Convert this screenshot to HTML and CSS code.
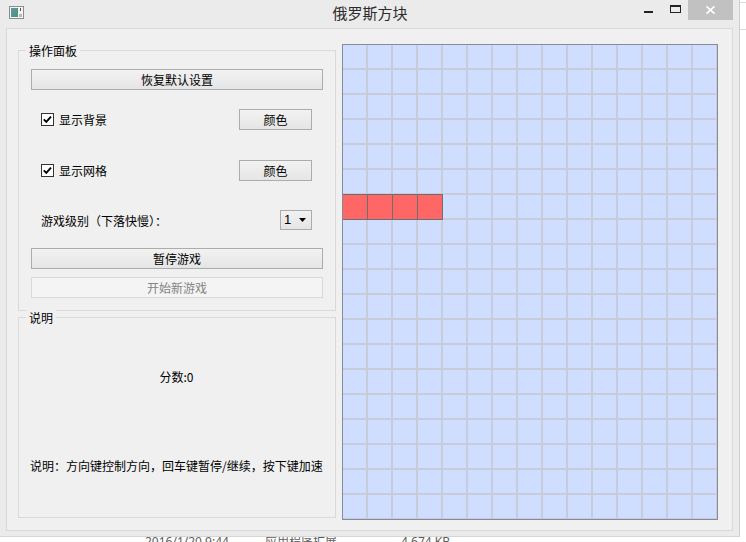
FILE: index.html
```html
<!DOCTYPE html>
<html lang="zh-CN">
<head>
<meta charset="utf-8">
<title>俄罗斯方块</title>
<link rel="stylesheet" href="styles.css">
</head>
<body>
<div class="screen">
  <div class="top">
    <div class="window">
      <div class="titlebar">
        <div class="tb-left">
          <svg class="app-icon" width="15" height="13" viewBox="0 0 15 13">
            <defs>
              <linearGradient id="ig" x1="0" y1="0" x2="1" y2="1">
                <stop offset="0" stop-color="#6b8fb0"/>
                <stop offset="1" stop-color="#3f9c70"/>
              </linearGradient>
            </defs>
            <rect x="0.5" y="0.5" width="14" height="12" fill="#f4f4f4" stroke="#8c8c8c"/>
            <rect x="2" y="2" width="7" height="9" fill="url(#ig)"/>
            <rect x="11" y="2" width="1" height="3" fill="#2f5f5f"/>
            <rect x="10" y="8" width="3" height="3" fill="#b8b8b8"/>
          </svg>
        </div>
        <div class="tb-title">俄罗斯方块</div>
        <div class="tb-controls">
          <div class="ctl ctl-min"><span class="min-glyph"></span></div>
          <div class="ctl ctl-max"><span class="max-glyph"></span></div>
          <div class="ctl ctl-close">
            <svg width="9" height="8" viewBox="0 0 9 8"><path d="M0.5 0.3 L8.5 7.7 M8.5 0.3 L0.5 7.7" stroke="#fff" stroke-width="1.6" fill="none"/></svg>
          </div>
        </div>
      </div>
      <div class="client">
        <div class="side">
          <div class="group group-ops">
            <span class="group-title">操作面板</span>
            <button class="btn btn-wide btn-reset">恢复默认设置</button>
            <div class="row row-first">
              <label class="check">
                <svg class="cb" width="13" height="13" viewBox="0 0 13 13"><rect x="0.5" y="0.5" width="12" height="12" fill="#fff" stroke="#333"/><path d="M2.8 6.3 L5.3 8.8 L10 3.6" fill="none" stroke="#000" stroke-width="1.9"/></svg>
                <span>显示背景</span>
              </label>
              <button class="btn btn-color">颜色</button>
            </div>
            <div class="row row-second">
              <label class="check">
                <svg class="cb" width="13" height="13" viewBox="0 0 13 13"><rect x="0.5" y="0.5" width="12" height="12" fill="#fff" stroke="#333"/><path d="M2.8 6.3 L5.3 8.8 L10 3.6" fill="none" stroke="#000" stroke-width="1.9"/></svg>
                <span>显示网格</span>
              </label>
              <button class="btn btn-color">颜色</button>
            </div>
            <div class="row row-level">
              <span>游戏级别（下落快慢）：</span>
              <div class="combo">
                <span class="combo-val">1</span>
                <svg class="combo-arrow" width="7" height="4" viewBox="0 0 7 4"><path d="M0 0 H7 L3.5 4 Z" fill="#000"/></svg>
              </div>
            </div>
            <button class="btn btn-wide btn-pause">暂停游戏</button>
            <button class="btn btn-wide btn-new" disabled>开始新游戏</button>
          </div>
          <div class="group group-info">
            <span class="group-title">说明</span>
            <div class="score">分数:0</div>
            <div class="help">说明：方向键控制方向，回车键暂停/继续，按下键加速</div>
          </div>
        </div>
        <svg class="board" width="376" height="476" viewBox="0 0 376 476">
          <defs>
            <pattern id="cell" width="25" height="25" patternUnits="userSpaceOnUse">
              <rect width="25" height="25" fill="#cfddff"/>
              <path d="M0 0 V25 M25 0 V25 M0 0 H25 M0 25 H25" stroke="#c8cbd9" stroke-width="2" fill="none"/>
            </pattern>
          </defs>
          <rect width="376" height="476" fill="url(#cell)"/>
          <g fill="#ff6666" stroke="#6e6e6e">
            <rect x="0.5" y="150.5" width="25" height="25"/>
            <rect x="25.5" y="150.5" width="25" height="25"/>
            <rect x="50.5" y="150.5" width="25" height="25"/>
            <rect x="75.5" y="150.5" width="25" height="25"/>
          </g>
          <rect x="0.5" y="0.5" width="375" height="475" fill="none" stroke="#858a9d"/>
        </svg>
      </div>
    </div>
    <div class="strip"></div>
  </div>
  <div class="desktop-row">
    <span class="d-date">2016/1/20 9:44</span>
    <span class="d-type">应用程序扩展</span>
    <span class="d-size">4,674 KB</span>
  </div>
</div>
</body>
</html>
```
FILE: styles.css
```css
* {
  box-sizing: border-box;
}

html, body {
  margin: 0;
  padding: 0;
}

body {
  width: 746px;
  height: 542px;
  overflow: hidden;
  background: #ffffff;
  font-family: "Noto Sans CJK SC", "Noto Sans", sans-serif;
  font-size: 12px;
  color: #000;
}

.screen {
  width: 746px;
  height: 542px;
}

.top {
  display: flex;
  height: 537px;
}

.window {
  width: 740px;
  height: 537px;
  flex: none;
  background: #ebebeb;
  border-right: 1px solid #cfcfcf;
  border-bottom: 1px solid #d6d6d6;
  display: flex;
  flex-direction: column;
}

.titlebar {
  height: 28px;
  flex: none;
  display: grid;
  grid-template-columns: 1fr auto 1fr;
  padding: 0 6px 0 7px;
}

.tb-left {
  display: flex;
  align-items: flex-start;
  padding-top: 6px;
  padding-left: 2px;
}

.app-icon {
  display: block;
}

.tb-title {
  font-size: 15px;
  line-height: 26px;
  color: #2b2b2b;
  white-space: nowrap;
}

.tb-controls {
  display: flex;
  justify-content: flex-end;
  align-items: flex-start;
}

.ctl {
  height: 20px;
  display: flex;
  justify-content: center;
  align-items: flex-start;
}

.ctl-min {
  width: 27px;
}

.min-glyph {
  width: 9px;
  height: 2px;
  margin-top: 11px;
  background: #222;
}

.ctl-max {
  width: 26px;
}

.max-glyph {
  width: 11px;
  height: 8px;
  margin-top: 5px;
  border: 1px solid #222;
  border-top-width: 2px;
}

.ctl-close {
  width: 45px;
  background: #c1c1c1;
  align-items: center;
}

.ctl-close svg {
  display: block;
}

.client {
  margin-left: 6px;
  width: 727px;
  height: 503px;
  flex: none;
  border: 1px solid #d9d9d9;
  background: #f0f0f0;
  display: flex;
  align-items: flex-start;
  gap: 6px;
  padding: 15px 0 0 11px;
}

.side {
  width: 318px;
  flex: none;
  margin-top: 6px;
  display: flex;
  flex-direction: column;
  gap: 6px;
}

.group {
  border: 1px solid #dadada;
  display: flex;
  flex-direction: column;
}

.group-title {
  align-self: flex-start;
  height: 15px;
  margin-top: -8px;
  padding: 0 3px;
  line-height: 15px;
  background: #f0f0f0;
  white-space: nowrap;
  flex: none;
}

.group-ops {
  height: 261px;
  padding: 0 12px 12px 12px;
}

.group-ops .group-title {
  margin-left: -5px;
}

.group-info {
  height: 201px;
  padding: 0 12px 0 11px;
}

.group-info .group-title {
  margin-left: -4px;
}

.btn {
  font: inherit;
  font-size: 12px;
  color: #000;
  height: 21px;
  padding: 0;
  margin: 0;
  border: 1px solid #acacac;
  border-radius: 0;
  background: linear-gradient(#f2f2f2, #e5e5e5);
  line-height: 18px;
  text-align: center;
  display: block;
  flex: none;
}

.btn-reset {
  margin-top: 11px;
}

.btn-pause {
  margin-top: 18px;
}

.btn-new {
  margin-top: 8px;
  color: #838383;
  border-color: #d9d9d9;
  background: #f4f4f4;
}

.row {
  display: flex;
  align-items: center;
  justify-content: space-between;
  padding: 0 11px 0 10px;
  flex: none;
}

.row-first {
  height: 21px;
  margin-top: 19px;
}

.row-second {
  height: 21px;
  margin-top: 30px;
}

.row-level {
  height: 20px;
  margin-top: 29px;
}

.check {
  display: flex;
  align-items: center;
  gap: 5px;
  line-height: 16px;
}

.cb {
  display: block;
  flex: none;
}

.btn-color {
  width: 73px;
}

.combo {
  width: 32px;
  height: 20px;
  border: 1px solid #acacac;
  background: linear-gradient(#f2f2f2, #e5e5e5);
  display: flex;
  align-items: center;
  padding-left: 3px;
  padding-right: 5px;
  line-height: 16px;
}

.combo-val {
  font-family: "Liberation Sans", "Noto Sans", sans-serif;
  font-size: 13px;
}

.combo-arrow {
  display: block;
  margin-left: auto;
}

.score {
  margin-top: 44px;
  text-align: center;
  line-height: 16px;
}

.help {
  margin-top: 73px;
  line-height: 16px;
  white-space: nowrap;
}

.board {
  display: block;
  flex: none;
}

.strip {
  flex: 1;
  background:
    linear-gradient(#dadada, #dadada) 0 2px / 100% 1px no-repeat,
    linear-gradient(#dadada, #dadada) 0 29px / 100% 1px no-repeat,
    #ffffff;
}

.desktop-row {
  height: 5px;
  overflow: hidden;
  display: flex;
  padding-left: 145px;
  font-family: "Noto Sans", "Noto Sans CJK SC", sans-serif;
  font-size: 12px;
  line-height: 10px;
  color: #5e5e5e;
  white-space: nowrap;
}

.d-date {
  width: 120px;
}

.d-type {
  width: 136px;
}
```
